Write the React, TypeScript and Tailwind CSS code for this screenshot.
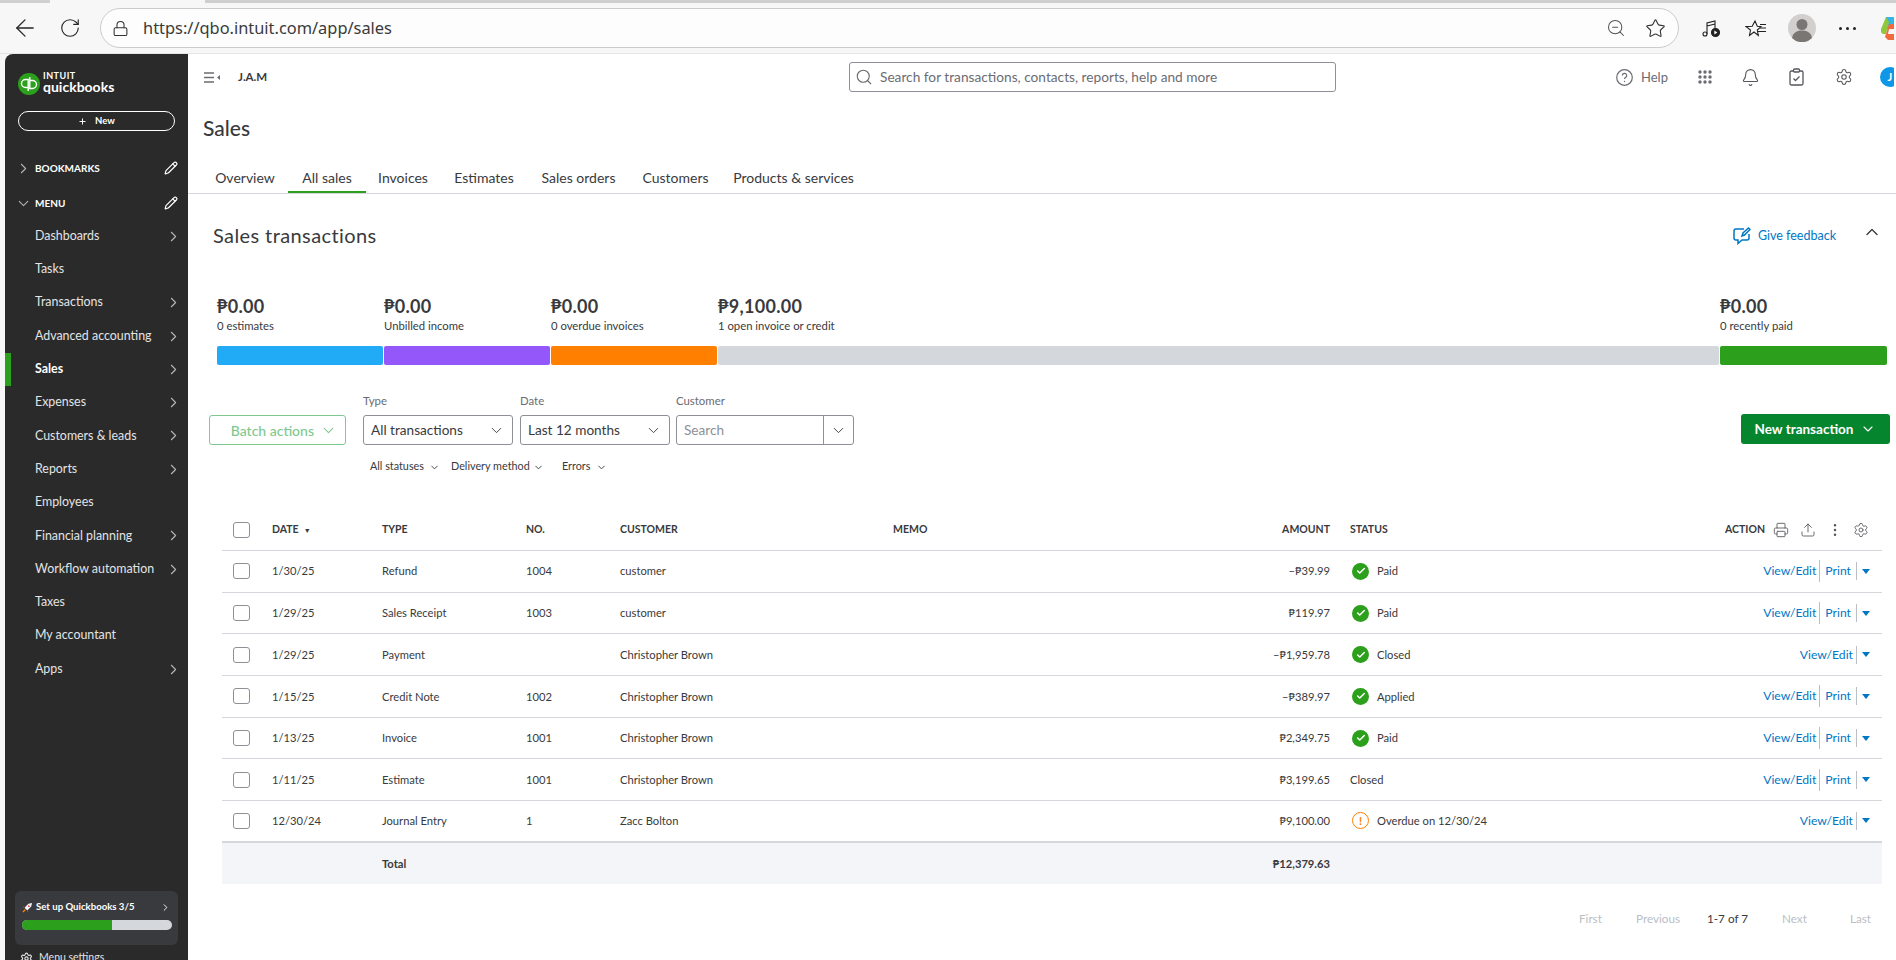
import React from "react";
import { ArrowLeft, RotateCw, Lock, ZoomOut, Star, ChevronRight, ChevronDown, ChevronUp, Pencil, Plus, Search, Settings, Bell, Printer, Upload, EllipsisVertical, Check } from "lucide-react";

const nav = [
  ["Dashboards", true],
  ["Tasks", false],
  ["Transactions", true],
  ["Advanced accounting", true],
  ["Sales", true],
  ["Expenses", true],
  ["Customers & leads", true],
  ["Reports", true],
  ["Employees", false],
  ["Financial planning", true],
  ["Workflow automation", true],
  ["Taxes", false],
  ["My accountant", false],
  ["Apps", true],
] as const;

const tabs = [
  ["Overview", "ml-[14px] w-[86px]"],
  ["All sales", "w-[78px]"],
  ["Invoices", "w-[74px]"],
  ["Estimates", "w-[88px]"],
  ["Sales orders", "w-[101px]"],
  ["Customers", "w-[93px]"],
  ["Products & services", "w-[143px]"],
] as const;

const stats = [
  ["₱0.00", "0 estimates", "bg-[#21abf6]"],
  ["₱0.00", "Unbilled income", "bg-[#9457fa]"],
  ["₱0.00", "0 overdue invoices", "bg-[#ff8000]"],
  ["₱9,100.00", "1 open invoice or credit", "bg-[#d4d7dc]"],
  ["₱0.00", "0 recently paid", "bg-[#2ca01c]"],
] as const;

type Row = { date: string; type: string; no: string; customer: string; amount: string; status: string; icon: "ok" | "warn" | "none"; print: boolean };
const rows: Row[] = [
  { date: "1/30/25", type: "Refund", no: "1004", customer: "customer", amount: "–₱39.99", status: "Paid", icon: "ok", print: true },
  { date: "1/29/25", type: "Sales Receipt", no: "1003", customer: "customer", amount: "₱119.97", status: "Paid", icon: "ok", print: true },
  { date: "1/29/25", type: "Payment", no: "", customer: "Christopher Brown", amount: "–₱1,959.78", status: "Closed", icon: "ok", print: false },
  { date: "1/15/25", type: "Credit Note", no: "1002", customer: "Christopher Brown", amount: "–₱389.97", status: "Applied", icon: "ok", print: true },
  { date: "1/13/25", type: "Invoice", no: "1001", customer: "Christopher Brown", amount: "₱2,349.75", status: "Paid", icon: "ok", print: true },
  { date: "1/11/25", type: "Estimate", no: "1001", customer: "Christopher Brown", amount: "₱3,199.65", status: "Closed", icon: "none", print: true },
  { date: "12/30/24", type: "Journal Entry", no: "1", customer: "Zacc Bolton", amount: "₱9,100.00", status: "Overdue on 12/30/24", icon: "warn", print: false },
];

const cols = "grid grid-cols-[50px_110px_144px_94px_273px_337px_100px_20px_1fr] items-center";

function Box() {
  return <span className="block h-[16px] w-[17px] rounded-[3px] border border-[#8d9096] bg-white" />;
}

function Arrow() {
  return <span className="ml-[4px] h-0 w-0 border-x-[4px] border-t-[5px] border-x-transparent border-t-[#0077c5]" />;
}

function Sidebar() {
  return (
    <aside className="flex w-[183px] shrink-0 flex-col rounded-tl-[8px] bg-[#2a2a2a] text-white">
      <div className="flex h-[57px] items-center pl-[13px] pt-[2px]">
        <svg width="22" height="22" viewBox="0 0 22 22" className="shrink-0">
          <circle cx="11" cy="11" r="11" fill="#2ca01c" />
          <path d="M10.200 18V6.500H7.500a4 4 0 0 0 0 8h2.700M11.800 4v11.500h2.700a4 4 0 0 0 0-8h-2.700" fill="none" stroke="#fff" strokeWidth="1.400" />
        </svg>
        <div className="ml-[3px] mt-[-3px] flex flex-col">
          <span className="text-[9px] font-bold leading-[9px] tracking-[0.5px]">INTUIT</span>
          <span className="text-[14px] font-bold leading-[14px]">quickbooks</span>
        </div>
      </div>
      <div className="ml-[13px] flex h-[20px] w-[157px] items-center justify-center gap-[8px] rounded-full border border-white text-[9.5px] font-bold">
        <Plus size={9} strokeWidth={2.5} />
        New
      </div>
      <div className="mt-[20px] flex h-[34px] items-center pl-[10px] pr-[10px] text-[10px] font-bold">
        <ChevronRight size={17} strokeWidth={1.5} className="text-[#b5b5b5]" />
        <span className="ml-[3px] flex-1">BOOKMARKS</span>
        <Pencil size={14} />
      </div>
      <div className="flex h-[36px] items-center pl-[10px] pr-[10px] text-[10px] font-bold">
        <ChevronDown size={17} strokeWidth={1.5} className="text-[#b5b5b5]" />
        <span className="ml-[3px] flex-1">MENU</span>
        <Pencil size={14} />
      </div>
      <nav className="-mt-[1.5px] flex flex-col">
        {nav.map(([label, more]) => {
          const on = label === "Sales";
          return (
            <div key={label} className={`flex h-[33.3px] items-center pr-[6px] text-[12.4px] ${on ? "border-l-[6px] border-[#2ca01c] pl-[24px] font-bold text-white" : "pl-[30px] text-[#e3e4e6]"}`}>
              <span className="flex-1">{label}</span>
              {more && <ChevronRight size={17} strokeWidth={1.5} className="text-[#b8b8b8]" />}
            </div>
          );
        })}
      </nav>
      <div className="mx-[10px] mt-auto flex h-[54px] flex-col rounded-[6px] bg-[#393a3d] px-[7px] pt-[7px]">
        <div className="flex h-[18px] items-center text-[9.6px] font-bold">
          <svg width="11" height="11" viewBox="0 0 12 12" className="mr-[3px] shrink-0">
            <path d="M4 8 3 6 7 2l4-1-1 4-4 4z" fill="#f2f2f2" />
            <circle cx="7.500" cy="4.500" r="1" fill="#e2445c" />
            <path d="M3 6 1 6.500 2 5zM6 9 5.500 11 7 10z" fill="#e2445c" />
            <path d="M3.500 8.500 1 11" stroke="#ff8000" strokeWidth="1.500" />
          </svg>
          <span className="flex-1 whitespace-nowrap">Set up Quickbooks 3/5</span>
          <ChevronRight size={11} />
        </div>
        <div className="mt-[4px] h-[10px] w-[150px] overflow-hidden rounded-full bg-[#d4d7dc]">
          <div className="h-full w-[90px] bg-[#2ca01c]" />
        </div>
      </div>
      <div className="mb-[-5px] ml-[15px] mt-[6px] flex h-[14px] items-center gap-[6px] text-[10.5px] text-[#e3e4e6]">
        <Settings size={13} />
        Menu settings
      </div>
    </aside>
  );
}

function Chrome() {
  return (
    <header className="flex h-[54px] shrink-0 flex-col border-b border-[#e5e5e5] bg-[#f7f7f7]">
      <div className="flex h-[3px] shrink-0">
        <div className="w-[50px] bg-[#d0d0d0]" />
        <div className="w-[155px] bg-[#f7f7f7]" />
        <div className="flex-1 bg-[#cfcfcf]" />
      </div>
      <div className="flex flex-1 items-center font-['Noto_Sans',sans-serif]">
        <ArrowLeft size={28} strokeWidth={1.1} className="ml-[11px] text-[#262626]" />
        <RotateCw size={22} strokeWidth={1.25} className="ml-[20px] text-[#262626]" />
        <div className="ml-[19px] flex h-[40px] w-[1579px] items-center rounded-full border border-[#cccccc] bg-[#fdfdfd] pr-[12px]">
          <Lock size={17} strokeWidth={1.5} className="ml-[11px] text-[#333]" />
          <span className="ml-[14px] flex-1 text-[16.4px] text-[#3a3a3a]">https://qbo.intuit.com/app/sales</span>
          <ZoomOut size={20} strokeWidth={1.25} className="text-[#555]" />
          <Star size={21} strokeWidth={1.25} className="ml-[19px] text-[#333]" />
        </div>
        <svg width="18" height="19" viewBox="0 0 18 19" className="ml-[23px] text-[#222]" fill="none" stroke="currentColor" strokeWidth="1.100">
          <circle cx="3" cy="15" r="2" />
          <path d="M5 15V4l8-2v7M5 7l8-2" />
          <circle cx="13.500" cy="13.500" r="4" fill="currentColor" />
          <path d="M12.300 11.500v4l3-2z" fill="#fff" stroke="none" />
        </svg>
        <svg width="22" height="20" viewBox="0 0 22 20" className="ml-[25px] text-[#222]" fill="none" stroke="currentColor" strokeWidth="1.100">
          <path d="M10 1l2.300 5.200 3.700.4-3.700 3.400 1 5.500L9 12l-4.500 3.500 1-5.500L1 6.600l6.200-.4z" transform="translate(0 2)" />
          <path d="M15 6.500h6M15 10h6M13 13.500h8" />
        </svg>
        <svg width="28" height="28" viewBox="0 0 28 28" className="ml-[21px]">
          <circle cx="14" cy="14" r="14" fill="#d2d0ce" />
          <circle cx="14" cy="10.500" r="5.500" fill="#7a7674" />
          <path d="M4 24c1-6 6-7.500 10-7.500S23 18 24 24a14 14 0 0 1-20 0z" fill="#7a7674" />
        </svg>
        <div className="ml-[23px] flex gap-[4px]">
          <span className="h-[3px] w-[3px] rounded-full bg-[#222]" />
          <span className="h-[3px] w-[3px] rounded-full bg-[#222]" />
          <span className="h-[3px] w-[3px] rounded-full bg-[#222]" />
        </div>
        <svg width="13" height="27" viewBox="0 0 13 27" className="ml-[25px] shrink-0">
          <path d="M5 2h8v12H6z" fill="#35b5e8" />
          <path d="M5 2 0 14c-1 3 1 5 3 5h2l3-12z" fill="#8fc73e" />
          <path d="M8 9h5v16H7l-3-3z" fill="#f36b3c" />
          <path d="M8 14h5v5H7z" fill="#f7f7f7" />
        </svg>
      </div>
    </header>
  );
}

function TopBar() {
  return (
    <div className="flex h-[46px] shrink-0 items-center text-[#6b6c72]">
      <svg width="16" height="11" viewBox="0 0 16 11" className="ml-[16px] shrink-0" fill="none" stroke="#6b6c72" strokeWidth="1.300">
        <path d="M0 1h10M0 5.500h10M0 10h10" />
        <path d="M16 3v5l-3-2.500z" fill="#6b6c72" stroke="none" />
      </svg>
      <span className="ml-[18px] w-[611px] shrink-0 text-[11.5px] font-bold text-[#393a3d]">J.A.M</span>
      <div className="flex h-[30px] w-[487px] shrink-0 items-center rounded-[3px] border border-[#8d9096] pl-[5px] text-[13.7px] text-[#6b6c72]">
        <Search size={18} strokeWidth={1.5} />
        <span className="ml-[7px] pt-[1px]">Search for transactions, contacts, reports, help and more</span>
      </div>
      <div className="ml-[280px] flex shrink-0 items-center text-[13px]">
        <svg width="17" height="17" viewBox="0 0 17 17" fill="none" stroke="#6b6c72" strokeWidth="1.200">
          <circle cx="8.500" cy="8.500" r="7.800" />
          <path d="M6.300 6.500a2.200 2.200 0 1 1 3.200 2c-.8.400-1 .8-1 1.500" />
          <circle cx="8.500" cy="12.500" r=".7" fill="#6b6c72" stroke="none" />
        </svg>
        <span className="ml-[8px] pt-[1px]">Help</span>
        <svg width="14" height="14" viewBox="0 0 14 14" className="ml-[30px]" fill="#6b6c72">
          {[2, 7, 12].flatMap((y) => [2, 7, 12].map((x) => <circle key={`${x}-${y}`} cx={x} cy={y} r="1.700" />))}
        </svg>
        <Bell size={19} strokeWidth={1.4} className="ml-[29px] text-[#55565b]" />
        <svg width="15" height="18" viewBox="0 0 15 18" className="ml-[29px]" fill="none" stroke="#55565b" strokeWidth="1.300">
          <rect x="1" y="3" width="13" height="14" rx="1.500" />
          <rect x="4.500" y="1" width="6" height="3" rx="1" fill="#fff" />
          <path d="M4.500 10.500l2 2 4-4" />
        </svg>
        <Settings size={18} strokeWidth={1.4} className="ml-[31px] text-[#55565b]" />
        <span className="ml-[27px] flex h-[20px] w-[14px] items-center justify-start overflow-hidden">
          <span className="flex h-[20px] w-[20px] shrink-0 items-center justify-center rounded-full bg-[#0d97e6] text-[11px] font-bold text-white">J</span>
        </span>
      </div>
    </div>
  );
}

function Select({ label, value, w }: { label: string; value: string; w: string }) {
  return (
    <div className="flex flex-col">
      <span className="h-[16px] pt-[1px] text-[11.4px] leading-[16px] text-[#6b6c72]">{label}</span>
      <div className={`mt-[7px] flex h-[30px] items-center justify-between rounded-[3px] border border-[#8d9096] pl-[7px] pr-[7px] text-[13.6px] text-[#393a3d] ${w}`}>
        <span>{value}</span>
        <ChevronDown size={17} strokeWidth={1.3} className="text-[#393a3d]" />
      </div>
    </div>
  );
}

function Table() {
  return (
    <div className="ml-[34px] mr-[14px] text-[11.2px] text-[#393a3d]">
      <div className={`${cols} h-[41px] border-b border-[#d4d7dc] text-[10.5px] font-bold`}>
        <span className="pl-[11px]"><Box /></span>
        <span className="flex items-center gap-[5px]">DATE<span className="text-[7px]">▼</span></span>
        <span>TYPE</span>
        <span>NO.</span>
        <span>CUSTOMER</span>
        <span>MEMO</span>
        <span className="text-right">AMOUNT</span>
        <span />
        <span className="col-start-9 flex items-center">
          <span className="flex-1">STATUS</span>
          <span>ACTION</span>
          <Printer size={16} strokeWidth={1.3} className="ml-[8px] text-[#55565b]" />
          <Upload size={16} strokeWidth={1.3} className="ml-[11px] text-[#55565b]" />
          <EllipsisVertical size={16} strokeWidth={1.8} className="ml-[11px] text-[#55565b]" />
          <Settings size={16} strokeWidth={1.3} className="ml-[10px] mr-[13px] text-[#55565b]" />
        </span>
      </div>
      {rows.map((r, i) => (
        <div key={i} className={`${cols} h-[41.7px] ${i === rows.length - 1 ? "border-b-2" : "border-b"} border-[#d4d7dc]`}>
          <span className="pl-[11px]"><Box /></span>
          <span className="pt-[1px]">{r.date}</span>
          <span className="pt-[1px]">{r.type}</span>
          <span className="pt-[1px]">{r.no}</span>
          <span className="pt-[1px]">{r.customer}</span>
          <span />
          <span className="pt-[1px] text-right">{r.amount}</span>
          <span />
          <span className="col-start-9 flex items-center">
            {r.icon === "ok" && (
              <span className="mr-[8px] ml-[2px] flex h-[17px] w-[17px] items-center justify-center rounded-full bg-[#2ca01c] text-white">
                <Check size={10} strokeWidth={3.5} />
              </span>
            )}
            {r.icon === "warn" && (
              <span className="mr-[8px] ml-[2px] flex h-[17px] w-[17px] items-center justify-center rounded-full border-[1.5px] border-[#ff8000] text-[11px] font-bold leading-none text-[#ff8000]">!</span>
            )}
            <span className="flex-1 pt-[1px]">{r.status}</span>
            <span className="mr-[12px] flex h-[22px] items-center text-[12.2px] text-[#0077c5]">
              <span>View/Edit</span>
              {r.print && (
                <>
                  <span className="mx-[3px] h-[22px] w-px bg-[#babec5]" />
                  <span className="mx-[2px]">Print</span>
                </>
              )}
              <span className="ml-[3px] mr-[1px] h-[18px] w-px bg-[#babec5]" />
              <Arrow />
            </span>
          </span>
        </div>
      ))}
      <div className={`${cols} h-[41px] bg-[#f4f5f8] pt-[3px] font-bold`}>
        <span className="col-start-3">Total</span>
        <span className="col-start-7 text-right">₱12,379.63</span>
      </div>
    </div>
  );
}

export default function App() {
  return (
    <div className="flex h-[960px] w-[1896px] flex-col overflow-hidden bg-[#f7f7f7] font-[Lato,sans-serif] text-[#393a3d]">
      <Chrome />
      <div className="flex min-h-0 flex-1 pl-[5px]">
        <Sidebar />
        <main className="flex min-w-0 flex-1 flex-col bg-white">
          <TopBar />
          <div className="flex h-[56px] shrink-0 items-center pl-[15px] text-[21px] font-medium">Sales</div>
          <div className="flex h-[38px] shrink-0 border-b border-[#d4d7dc]">
            {tabs.map(([label, w]) => (
              <div key={label} className={`flex shrink-0 items-center justify-center text-[14px] text-[#393a3d] ${w} ${label === "All sales" ? "border-b-2 border-[#2ca01c] pt-[7px]" : "pt-[5px]"}`}>
                {label}
              </div>
            ))}
          </div>
          <div className="flex h-[84px] shrink-0 items-center pl-[25px] pr-[14px]">
            <span className="flex-1 pb-[2px] text-[20px] tracking-[0.4px]">Sales transactions</span>
            <svg width="18" height="18" viewBox="0 0 18 18" fill="none" stroke="#0077c5" strokeWidth="1.500">
              <path d="M11 2H3a2 2 0 0 0-2 2v7a2 2 0 0 0 2 2h2v3.500L9 13h5a2 2 0 0 0 2-2V7" />
              <path d="M9 9l1-3 5.500-5L17 2.500 11.500 8z" />
            </svg>
            <span className="ml-[7px] text-[12.5px] text-[#0077c5]">Give feedback</span>
            <ChevronUp size={20} strokeWidth={1.6} className="-mt-[8px] ml-[26px] text-[#393a3d]" />
          </div>
          <div className="ml-[29px] grid w-[1670px] shrink-0 grid-cols-[166px_166px_166px_1001px_167px] gap-x-[1px] pt-[18px]">
            {stats.map(([v, s, c]) => (
              <div key={s} className="flex flex-col">
                <span className="h-[20px] text-[18px] font-bold leading-[20px] tracking-[0.3px]">{v}</span>
                <span className="mt-[2px] h-[16px] text-[11.3px] leading-[16px]">{s}</span>
                <span className={`mt-[12px] h-[19px] rounded-[2px] ${c}`} />
              </div>
            ))}
          </div>
          <div className="ml-[21px] mr-[6px] mt-[27px] flex shrink-0 items-start">
            <div className="mt-[23px] flex h-[30px] w-[137px] items-center justify-end rounded-[3px] border border-[#7fc88f] pr-[8px] text-[14px] font-medium text-[#7fc88f]">
              Batch actions
              <ChevronDown size={17} strokeWidth={1.5} className="ml-[6px]" />
            </div>
            <div className="ml-[17px] flex flex-col">
              <div className="flex gap-[7px]">
                <Select label="Type" value="All transactions" w="w-[150px]" />
                <Select label="Date" value="Last 12 months" w="w-[150px]" />
                <div className="-ml-[1px] flex flex-col">
                  <span className="h-[16px] pt-[1px] text-[11.4px] leading-[16px] text-[#6b6c72]">Customer</span>
                  <div className="mt-[7px] flex h-[30px] w-[178px] items-center rounded-[3px] border border-[#8d9096] text-[13.6px] text-[#8d9096]">
                    <span className="flex h-full flex-1 items-center border-r border-[#8d9096] pl-[7px]">Search</span>
                    <span className="flex w-[29px] justify-center text-[#393a3d]"><ChevronDown size={17} strokeWidth={1.3} /></span>
                  </div>
                </div>
              </div>
              <div className="mt-[13px] flex h-[16px] items-center pl-[7px] text-[10.8px]">
                <span className="w-[81px]">All statuses <ChevronDown size={11} className="ml-[2px] inline" /></span>
                <span className="w-[111px]">Delivery method <ChevronDown size={11} className="ml-[1px] inline" /></span>
                <span>Errors <ChevronDown size={11} className="ml-[3px] inline" /></span>
              </div>
            </div>
            <div className="ml-auto mt-[22px] flex h-[30px] w-[149px] items-center justify-center gap-[7px] rounded-[3px] bg-[#06852f] text-[13.5px] font-bold text-white">
              New transaction
              <ChevronDown size={16} strokeWidth={1.7} />
            </div>
          </div>
          <div className="mt-[36px] shrink-0">
            <Table />
          </div>
          <div className="ml-[1391px] mt-[27px] flex h-[16px] items-center text-[11.7px] text-[#babec5]">
            <span className="w-[57px]">First</span>
            <span className="w-[71px]">Previous</span>
            <span className="w-[75px] text-[#393a3d]">1-7 of 7</span>
            <span className="w-[68px]">Next</span>
            <span>Last</span>
          </div>
        </main>
      </div>
    </div>
  );
}
